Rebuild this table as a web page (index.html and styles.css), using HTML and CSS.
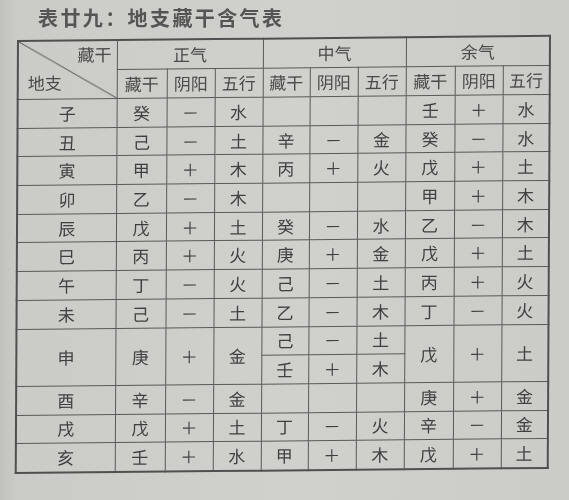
FILE: index.html
```html
<!DOCTYPE html>
<html lang="zh">
<head>
<meta charset="utf-8">
<title>地支藏干含气表</title>
<link rel="stylesheet" href="styles.css">
</head>
<body>
<div class="page">
  <h1 class="title">表廿九：地支藏干含气表</h1>
  <table class="qi">
    <colgroup>
      <col class="c-zhi">
      <col class="c50"><col class="c48"><col class="c48">
      <col class="c47"><col class="c48"><col class="c48">
      <col class="c49"><col class="c48"><col class="c47">
    </colgroup>
    <thead>
      <tr>
        <th rowspan="2" class="diag">
          <div class="diag-in">
            <span class="d-top">藏干</span>
            <span class="d-bot">地支</span>
          </div>
        </th>
        <th colspan="3">正气</th>
        <th colspan="3">中气</th>
        <th colspan="3">余气</th>
      </tr>
      <tr>
        <th>藏干</th><th>阴阳</th><th>五行</th>
        <th>藏干</th><th>阴阳</th><th>五行</th>
        <th>藏干</th><th>阴阳</th><th>五行</th>
      </tr>
    </thead>
    <tbody>
      <tr><td>子</td><td>癸</td><td>－</td><td>水</td><td></td><td></td><td></td><td>壬</td><td>＋</td><td>水</td></tr>
      <tr><td>丑</td><td>己</td><td>－</td><td>土</td><td>辛</td><td>－</td><td>金</td><td>癸</td><td>－</td><td>水</td></tr>
      <tr><td>寅</td><td>甲</td><td>＋</td><td>木</td><td>丙</td><td>＋</td><td>火</td><td>戊</td><td>＋</td><td>土</td></tr>
      <tr><td>卯</td><td>乙</td><td>－</td><td>木</td><td></td><td></td><td></td><td>甲</td><td>＋</td><td>木</td></tr>
      <tr><td>辰</td><td>戊</td><td>＋</td><td>土</td><td>癸</td><td>－</td><td>水</td><td>乙</td><td>－</td><td>木</td></tr>
      <tr><td>巳</td><td>丙</td><td>＋</td><td>火</td><td>庚</td><td>＋</td><td>金</td><td>戊</td><td>＋</td><td>土</td></tr>
      <tr><td>午</td><td>丁</td><td>－</td><td>火</td><td>己</td><td>－</td><td>土</td><td>丙</td><td>＋</td><td>火</td></tr>
      <tr><td>未</td><td>己</td><td>－</td><td>土</td><td>乙</td><td>－</td><td>木</td><td>丁</td><td>－</td><td>火</td></tr>
      <tr><td rowspan="2">申</td><td rowspan="2">庚</td><td rowspan="2">＋</td><td rowspan="2">金</td><td>己</td><td>－</td><td>土</td><td rowspan="2">戊</td><td rowspan="2">＋</td><td rowspan="2">土</td></tr>
      <tr><td>壬</td><td>＋</td><td>木</td></tr>
      <tr><td>酉</td><td>辛</td><td>－</td><td>金</td><td></td><td></td><td></td><td>庚</td><td>＋</td><td>金</td></tr>
      <tr><td>戌</td><td>戊</td><td>＋</td><td>土</td><td>丁</td><td>－</td><td>火</td><td>辛</td><td>－</td><td>金</td></tr>
      <tr><td>亥</td><td>壬</td><td>＋</td><td>水</td><td>甲</td><td>＋</td><td>木</td><td>戊</td><td>＋</td><td>土</td></tr>
    </tbody>
  </table>
</div>
</body>
</html>
```

FILE: styles.css
```css
html, body {
  margin: 0;
  padding: 0;
}
body {
  width: 569px;
  height: 500px;
  overflow: hidden;
  background: linear-gradient(to right, #c2c2be 0px, #cbcbc7 18px, #d0d0cc 300px, #cbcbc7 569px);
  font-family: "Noto Sans CJK SC", "Noto Sans", sans-serif;
  color: #3d3d3d;
}
.page {
  padding: 4px 0 0 17px;
  filter: blur(0.35px);
}
.title {
  margin: 0 0 8px 21px;
  font-size: 20px;
  line-height: 28px;
  height: 28px;
  font-weight: 700;
  letter-spacing: 2.4px;
  color: #555;
}
.qi {
  border-collapse: collapse;
  table-layout: fixed;
  width: 534px;
  border: 2px solid #505050;
  transform-origin: 0 0;
  transform: skewY(-0.55deg) skewX(-0.3deg);
  font-size: 17px;
}
.c-zhi { width: 99px; }
.c50 { width: 50px; }
.c49 { width: 49px; }
.c48 { width: 48px; }
.c47 { width: 47px; }
.qi th, .qi td {
  border: 1.5px solid #5a5a5a;
  padding: 0;
  height: 27.7px;
  text-align: center;
  vertical-align: middle;
  font-weight: 400;
  line-height: 20px;
  color: #404040;
}
.qi thead th {
  color: #4a4a4a;
}
.diag {
  background: linear-gradient(to top right, transparent calc(50% - 0.9px), #555 50%, transparent calc(50% + 0.9px));
}
.diag-in {
  display: flex;
  flex-direction: column;
  justify-content: space-between;
  height: 48px;
  padding: 3px 5px 6px 9px;
}
.d-top { align-self: flex-end; }
.d-bot { align-self: flex-start; }
```
